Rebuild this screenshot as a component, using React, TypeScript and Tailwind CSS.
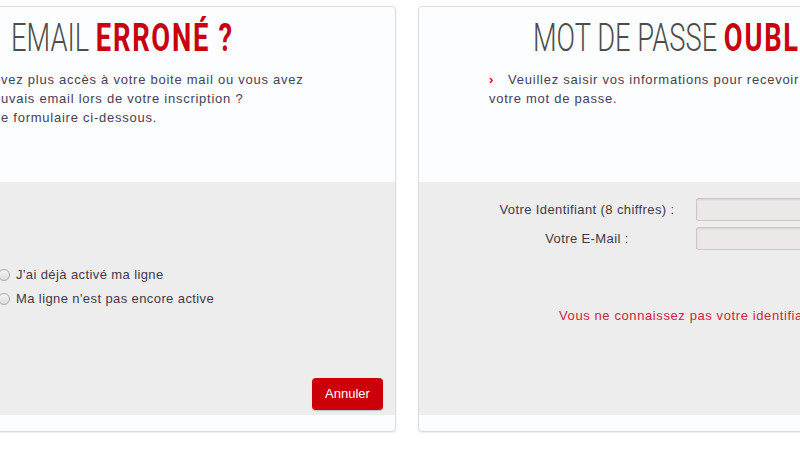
const sans = "font-['Liberation_Sans',Arial,sans-serif]";
const title = "font-['Roboto','Liberation_Sans',sans-serif]";

function Radio({ label }: { label: string }) {
  return (
    <label className="flex h-[24px] items-center gap-[6px]">
      <span className="h-[12px] w-[12px] rounded-full border border-[#a9a9a9] bg-gradient-to-b from-[#f4f4f4] to-[#dcdcdc]" />
      <span className="text-[13px] tracking-[0.4px] text-[#3f3a4a]">{label}</span>
    </label>
  );
}

export default function App() {
  return (
    <div className={`flex h-[450px] w-[800px] gap-[22px] overflow-hidden bg-white pt-[6px] ${sans}`}>
      {/* email card */}
      <div className="-ml-[24px] flex h-[426px] w-[420px] shrink-0 flex-col overflow-hidden rounded-[4px] border border-[#dcdcdc] bg-[#fcfdfe] shadow-[0_1px_2px_rgba(0,0,0,0.08)]">
        <div className="h-[175px] pl-[24px] pt-[12px]">
          <h1 className={`${title} ml-[10px] inline-block origin-left scale-x-[0.7] whitespace-nowrap text-[39px] leading-[39px]`}>
            <span className="font-light text-[#4d4d4d]">EMAIL </span>
            <span className="font-bold tracking-[2.5px] text-[#c8000f]">ERRONÉ ?</span>
          </h1>
          <p className="mt-[12px] whitespace-nowrap text-[13px] leading-[19px] tracking-[0.75px] text-[#464155]">
            vez plus accès à votre boite mail ou vous avez
            <br />
            uvais email lors de votre inscription ?
            <br />
            e formulaire ci-dessous.
          </p>
        </div>
        <div className="flex h-[233px] flex-col bg-[#ededed] pl-[21px] pr-[12px] pt-[81px] pb-[5px]">
          <Radio label="J'ai déjà activé ma ligne" />
          <Radio label="Ma ligne n'est pas encore active" />
          <div className="mt-auto flex justify-end">
            <button className="h-[32px] w-[71px] rounded-[4px] bg-[#cc0008] text-[13px] text-white shadow-[0_1px_1px_rgba(0,0,0,0.2)]">
              Annuler
            </button>
          </div>
        </div>
        <div className="flex-1" />
      </div>

      {/* password card */}
      <div className="flex h-[426px] w-[420px] shrink-0 flex-col overflow-hidden rounded-[4px] border border-[#dcdcdc] bg-[#fcfdfe] shadow-[0_1px_2px_rgba(0,0,0,0.08)]">
        <div className="h-[175px] pt-[12px]">
          <h1 className={`${title} ml-[114px] inline-block origin-left scale-x-[0.7] whitespace-nowrap text-[39px] leading-[39px]`}>
            <span className="font-light text-[#4d4d4d]">MOT DE PASSE </span>
            <span className="font-bold tracking-[2.5px] text-[#c8000f]">OUBLIÉ ?</span>
          </h1>
          <p className="ml-[70px] mt-[12px] whitespace-nowrap text-[13px] leading-[19px] tracking-[0.75px] text-[#464155]">
            <span className="mr-[14px] font-bold text-[#c8000f]">›</span>
            Veuillez saisir vos informations pour recevoir
            <br />
            votre mot de passe.
          </p>
        </div>
        <div className="flex h-[233px] flex-col bg-[#ededed] pt-[16px]">
          <div className="grid grid-cols-[200px_1fr] items-center gap-x-[9px] gap-y-[6px] pl-[68px]">
            <span className="text-center text-[13px] tracking-[0.4px] text-[#3f3a4a]">Votre Identifiant (8 chiffres) :</span>
            <input className="h-[23px] w-[160px] rounded-[2px] border border-[#c9c9c9] bg-[#ede8e8] shadow-[inset_0_1px_2px_rgba(0,0,0,0.1)]" />
            <span className="text-center text-[13px] tracking-[0.4px] text-[#3f3a4a]">Votre E-Mail :</span>
            <input className="h-[23px] w-[160px] rounded-[2px] border border-[#c9c9c9] bg-[#ede8e8] shadow-[inset_0_1px_2px_rgba(0,0,0,0.1)]" />
          </div>
          <p className="ml-[140px] mt-[56px] whitespace-nowrap text-[13px] leading-[19px] tracking-[0.6px] text-[#d2233c]">
            Vous ne connaissez pas votre identifiant ?
          </p>
        </div>
        <div className="flex-1" />
      </div>
    </div>
  );
}
